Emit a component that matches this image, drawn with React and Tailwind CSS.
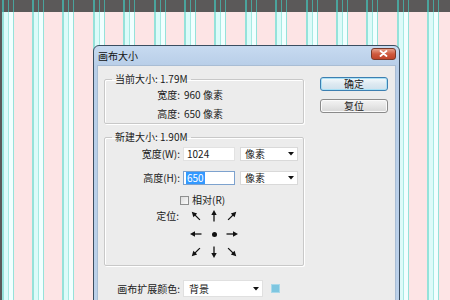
import React from "react";

const FONT = { fontFamily: '"Noto Sans CJK SC", "Noto Sans", sans-serif' };

function StripeCol() {
  return (
    <div className="flex flex-col w-[30.4px] shrink-0">
      <div className="h-[12px] flex bg-[#5b5959]">
        <div className="w-[2px] bg-[#4aa39c]" />
        <div className="w-[4px]" />
        <div className="w-[1px] bg-[#4aa39c]" />
        <div className="w-[4px]" />
        <div className="w-[1px] bg-[#4aa39c]" />
      </div>
      <div className="flex-1 flex bg-[#fde4e5]">
        <div className="w-[2px] bg-[#95e2da]" />
        <div className="w-[4px] bg-[#dcfbf9]" />
        <div className="w-[1px] bg-[#a6e9e2]" />
        <div className="w-[4px] bg-[#f1ffff]" />
        <div className="w-[1px] bg-[#95e2da]" />
      </div>
    </div>
  );
}

function Arrow({ angle }) {
  // arrow pointing to the right by default, rotated
  return (
    <div className="h-[18px] w-[18px] flex items-center justify-center">
      <svg width="14" height="14" viewBox="0 0 14 14" style={{ transform: `rotate(${angle}deg)` }}>
        <line x1="1.5" y1="7" x2="9" y2="7" stroke="#111" strokeWidth="1.3" />
        <polygon points="13,7 8,4.3 8,9.7" fill="#111" />
      </svg>
    </div>
  );
}

function Select({ text, w }) {
  return (
    <div className={`h-[14px] ${w} bg-white border border-[#d9d9d9] flex items-center pl-[4px] pr-[3px] justify-between`}>
      <span className="leading-[12px]">{text}</span>
      <svg width="6" height="4" viewBox="0 0 6 4"><polygon points="0,0 6,0 3,3.5" fill="#111" /></svg>
    </div>
  );
}

export default function App() {
  const cols = Array.from({ length: 16 });
  return (
    <div className="relative w-[450px] h-[300px] overflow-hidden bg-[#fde4e5] text-[10px] text-[#1a1a1a]" style={FONT}>
      {/* background canvas with guides */}
      <div className="flex h-full">
        <div className="w-[6px] shrink-0 bg-[#5b5959]" />
        <div className="flex h-full -ml-[4.4px]">
          {cols.map((_, i) => (
            <StripeCol key={i} />
          ))}
        </div>
      </div>

      {/* dialog */}
      <div className="absolute left-[93px] top-[45px] w-[307px] h-[270px] rounded-t-[6px] border border-[#3b4d60] bg-[linear-gradient(#c7daf0,#b8cee8_20px,#bcd1ea)] flex flex-col px-[3px]">
        <div className="h-[19px] flex items-center justify-between pl-[1px]">
          <span className="leading-[12px] text-[#111]">画布大小</span>
          <div className="w-[25px] h-[12px] -mt-[4px] rounded-[3px] border border-[#7a3a2a] bg-[linear-gradient(#e8a08a,#cf5a3e_50%,#c0442a)] flex items-center justify-center">
            <svg width="9" height="7" viewBox="0 0 9 7">
              <path d="M1.5 1 L7.5 6 M7.5 1 L1.5 6" stroke="#fff" strokeWidth="1.8" strokeLinecap="round" />
            </svg>
          </div>
        </div>
        <div className="flex-1 bg-[#ececec] border border-[#a9bdd4] flex pl-[6px] pt-[7px]">
          {/* left column */}
          <div className="w-[200px] flex flex-col">
            <fieldset className="border border-[#c8c8c8] rounded-[2px] shadow-[inset_1px_1px_0_#fff,1px_1px_0_#fff]">
              <legend className="ml-[7px] px-[3px] leading-[12px]">当前大小: 1.79M</legend>
              <div className="flex flex-col pt-[0px]">
                <div className="h-[19px] flex items-center">
                  <span className="w-[75px] text-right">宽度:</span>
                  <span className="ml-[4px]">960 像素</span>
                </div>
                <div className="h-[19px] flex items-center">
                  <span className="w-[75px] text-right">高度:</span>
                  <span className="ml-[4px]">650 像素</span>
                </div>
              </div>
            </fieldset>

            <fieldset className="mt-[7px] border border-[#c8c8c8] rounded-[2px] shadow-[inset_1px_1px_0_#fff,1px_1px_0_#fff]">
              <legend className="ml-[7px] px-[3px] leading-[12px]">新建大小: 1.90M</legend>
              <div className="flex flex-col pt-[4px] pb-[4px]">
                <div className="h-[14px] flex items-center">
                  <span className="w-[75px] text-right leading-[12px]">宽度(W):</span>
                  <div className="ml-[3px] w-[52px] h-[14px] bg-white border border-[#e2e2e2] pl-[3px] flex items-center leading-[12px]">1024</div>
                  <div className="ml-[5px]"><Select text="像素" w="w-[58px]" /></div>
                </div>
                <div className="mt-[10px] h-[14px] flex items-center">
                  <span className="w-[75px] text-right leading-[12px]">高度(H):</span>
                  <div className="ml-[3px] w-[52px] h-[14px] bg-white border border-[#7da2ce] pl-[2px] flex items-center leading-[12px]">
                    <span className="bg-[#3399ff] text-white px-[1px]">650</span>
                  </div>
                  <div className="ml-[5px]"><Select text="像素" w="w-[58px]" /></div>
                </div>
                <div className="mt-[9px] h-[12px] flex items-center pl-[75px]">
                  <div className="w-[9px] h-[9px] border border-[#8e8f8f] bg-[linear-gradient(135deg,#dcdcdc,#fbfbfb)]" />
                  <span className="ml-[3px] leading-[12px]">相对(R)</span>
                </div>
                <div className="mt-[1px] flex items-start">
                  <span className="w-[74px] text-right h-[18px] leading-[18px]">定位:</span>
                  <div className="ml-[8px] grid grid-cols-3">
                    <Arrow angle={-135} />
                    <Arrow angle={-90} />
                    <Arrow angle={-45} />
                    <Arrow angle={180} />
                    <div className="h-[18px] w-[18px] flex items-center justify-center">
                      <div className="w-[5px] h-[5px] rounded-full bg-[#111]" />
                    </div>
                    <Arrow angle={0} />
                    <Arrow angle={135} />
                    <Arrow angle={90} />
                    <Arrow angle={45} />
                  </div>
                </div>
              </div>
            </fieldset>

            <div className="mt-[14px] flex items-center">
              <span className="w-[76px] text-right">画布扩展颜色:</span>
              <div className="ml-[3px] w-[80px] h-[17px] bg-white border border-[#e0e0e0] flex items-center justify-between pl-[5px] pr-[3px]">
                <span>背景</span>
                <svg width="6" height="4" viewBox="0 0 6 4"><polygon points="0,0 6,0 3,3.5" fill="#111" /></svg>
              </div>
              <div className="ml-[8px] w-[9px] h-[9px] bg-[#7ec6e0] border border-[#a9d9ea]" />
            </div>
          </div>

          {/* right column */}
          <div className="ml-[16px] pt-[4px] flex flex-col gap-[8px]">
            <div className="w-[68px] h-[14px] rounded-[3px] border border-[#3c7fb1] shadow-[inset_0_0_0_1px_#a9e0f5] bg-[linear-gradient(#f4f9fc,#dde9f1_50%,#cfe0ec)] flex items-center justify-center leading-[12px]">确定</div>
            <div className="w-[68px] h-[14px] rounded-[3px] border border-[#8a8a8a] shadow-[inset_0_0_0_1px_#fafafa] bg-[linear-gradient(#f3f3f3,#e6e6e6_50%,#d6d6d6)] flex items-center justify-center leading-[12px]">复位</div>
          </div>
        </div>
      </div>
    </div>
  );
}
